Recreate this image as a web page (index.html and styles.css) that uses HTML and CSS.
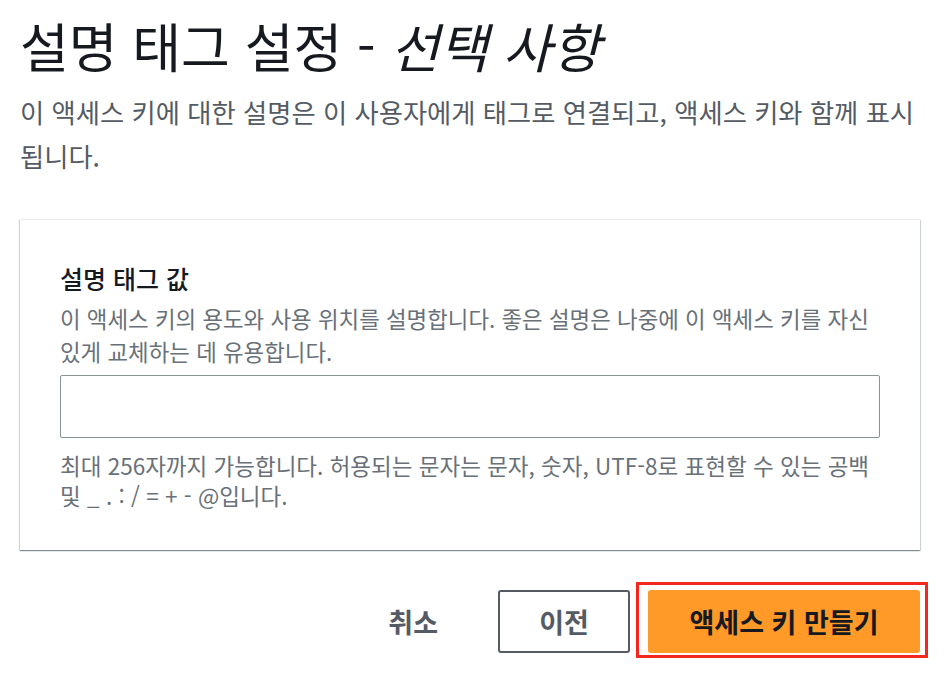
FILE: index.html
```html
<!DOCTYPE html>
<html lang="ko">
<head>
<meta charset="utf-8">
<link rel="stylesheet" href="styles.css">
</head>
<body>
<main class="page">
  <h1 class="title">설명 태그 설정 - <i class="optional">선택 사항</i></h1>
  <p class="lead">이 액세스 키에 대한 설명은 이 사용자에게 태그로 연결되고, 액세스 키와 함께 표시 됩니다.</p>
  <section class="card">
    <label class="label" for="desc">설명 태그 값</label>
    <p class="hint">이 액세스 키의 용도와 사용 위치를 설명합니다. 좋은 설명은 나중에 이 액세스 키를 자신 있게 교체하는 데 유용합니다.</p>
    <input class="field" id="desc" type="text">
    <p class="constraint">최대 256자까지 가능합니다. 허용되는 문자는 문자, 숫자, UTF-8로 표현할 수 있는 공백 및 _ . : / = + - @입니다.</p>
  </section>
  <div class="actions">
    <button class="btn btn-link">취소</button>
    <button class="btn btn-normal">이전</button>
    <div class="highlight"><button class="btn btn-primary">액세스 키 만들기</button></div>
  </div>
</main>
</body>
</html>
```
FILE: styles.css
```css
* { box-sizing: border-box; }
html, body { margin: 0; padding: 0; background: #ffffff; }
body {
  font-family: "Noto Sans CJK KR", "Noto Sans", sans-serif;
  color: #16191f;
  word-break: keep-all;
}
.page {
  width: 950px;
  min-height: 678px;
  padding: 0 30px 25px 20px;
}
.title {
  margin: 0;
  font-size: 53px;
  line-height: 90px;
  font-weight: 400;
  color: #16191f;
  white-space: nowrap;
}
.optional { font-style: italic; }
.lead {
  margin: 0;
  font-size: 26.3px;
  line-height: 44px;
  color: #545b64;
}
.card {
  margin-top: 41px;
  width: 900px;
  background: #fff;
  border-top: 1px solid #eaeded;
  box-shadow: 0 1px 1px 0 rgba(0, 28, 36, 0.3), 1px 1px 1px 0 rgba(0, 28, 36, 0.15), -1px 1px 1px 0 rgba(0, 28, 36, 0.15);
  padding: 40px 40px 40px 40px;
  display: flex;
  flex-direction: column;
}
.label {
  font-size: 25px;
  line-height: 36px;
  font-weight: 500;
  color: #16191f;
}
.hint {
  margin: 6px 0 0;
  font-size: 22.4px;
  line-height: 33px;
  color: #687078;
}
.field {
  margin-top: 7px;
  width: 820px;
  height: 63px;
  border: 1px solid #879596;
  border-radius: 2px;
  background: #fff;
  font: inherit;
}
.constraint {
  margin: 12px 0 0;
  font-size: 22.5px;
  line-height: 30px;
  color: #687078;
}
.actions {
  margin-top: 40px;
  width: 900px;
  display: flex;
  justify-content: flex-end;
  align-items: center;
  gap: 18px;
}
.btn {
  display: block;
  font-family: inherit;
  font-size: 27px;
  font-weight: 700;
  height: 63px;
  border-radius: 3px;
  cursor: pointer;
  white-space: nowrap;
}
.btn-link {
  background: transparent;
  border: 0;
  color: #545b64;
  padding: 0 20px;
  margin-right: 22px;
}
.btn-normal {
  width: 132px;
  background: #fff;
  border: 2px solid #545b64;
  color: #545b64;
}
.highlight {
  display: flex;
  border: 3px solid #f3271d;
  padding: 5px 5px 2px 9px;
  margin: -8px -8px -5px -12px;
}
.btn-primary {
  width: 272px;
  background: #ff9a28;
  border: 0;
  color: #16191f;
}
```
